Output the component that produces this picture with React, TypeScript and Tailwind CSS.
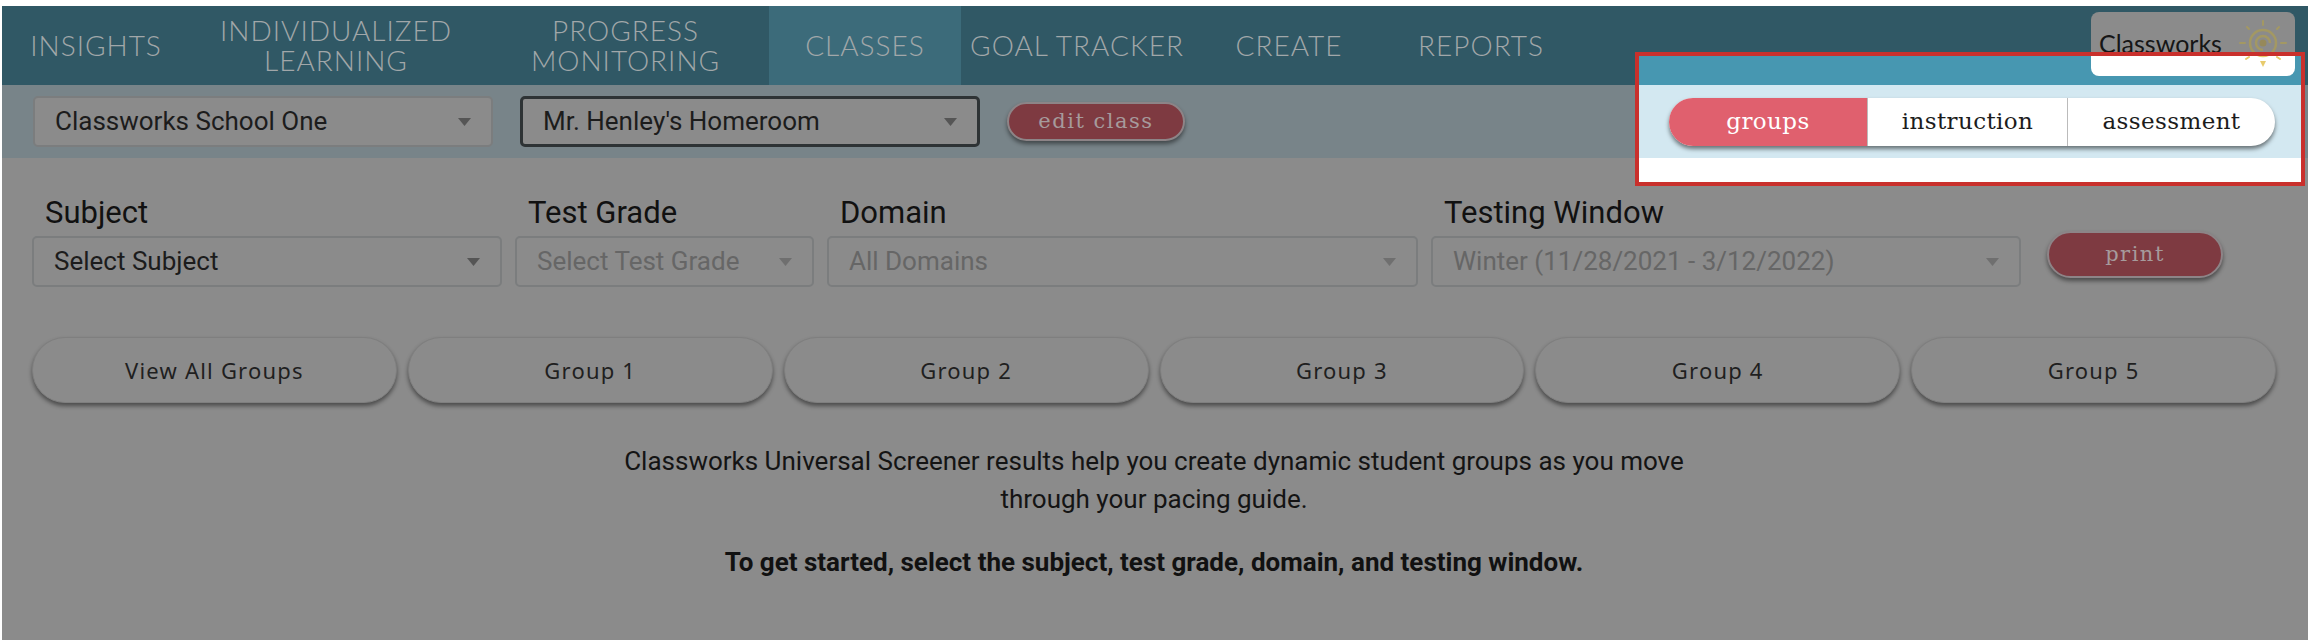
import React from "react";

const navItems: { lines: string[]; w: string; active?: boolean }[] = [
  { lines: ["INSIGHTS"], w: "w-[188px]" },
  { lines: ["INDIVIDUALIZED", "LEARNING"], w: "w-[292px]" },
  { lines: ["PROGRESS", "MONITORING"], w: "w-[287px]" },
  { lines: ["CLASSES"], w: "w-[192px]", active: true },
  { lines: ["GOAL TRACKER"], w: "w-[232px]" },
  { lines: ["CREATE"], w: "w-[192px]" },
  { lines: ["REPORTS"], w: "w-[192px]" },
];

function Select({ text, w, disabled, focus }: { text: string; w: string; disabled?: boolean; focus?: boolean }) {
  return (
    <div
      className={`${w} h-[51px] flex items-center justify-between pl-[20px] pr-[20px] rounded-[5px] text-[26px] font-['Roboto',sans-serif] ${
        focus ? "border-[3px] border-[#2e3335] bg-[#8b8b8b]" : "border-2 border-[#7b7d7e] bg-[#8b8b8b]"
      } ${disabled ? "text-[#666666]" : "text-[#1c1c1c]"}`}
    >
      <span className="whitespace-nowrap">{text}</span>
      <svg width="13" height="8" viewBox="0 0 13 8" className="shrink-0">
        <path d="M0 0h13L6.5 8z" fill={disabled ? "#6f6f6f" : "#555555"} />
      </svg>
    </div>
  );
}

function Field({ label, children }: { label: string; children: React.ReactNode }) {
  return (
    <div className="flex flex-col">
      <div className="pl-[13px] h-[42px] text-[31px] leading-[37px] text-[#111111] font-['Roboto',sans-serif]">{label}</div>
      {children}
    </div>
  );
}

function RedButton({ text, w, h }: { text: string; w: string; h: string }) {
  return (
    <div
      className={`${w} ${h} flex items-center justify-center rounded-full bg-[#7e3a41] border-2 border-[#8d8487] shadow-[0_3px_4px_rgba(0,0,0,0.45)] text-[#a69a9c] text-[21px] tracking-[1.5px] font-['DejaVu_Serif',serif]`}
    >
      {text}
    </div>
  );
}

function Sun({ className, ink, core }: { className: string; ink: string; core: string }) {
  return (
    <svg viewBox="0 0 50 50" width="50" height="50" className={className} fill="none">
      <circle cx="25" cy="25" r="13" stroke={ink} strokeWidth="2.5" />
      <path d="M25 32a7 7 0 1 1 7-7" stroke={ink} strokeWidth="2.5" />
      <circle cx="25" cy="25" r="3.5" fill={core} />
      <path d="M25 3v4M2 25h5M43 25h5M9 9l2 2M41 9l-2 2M8 41l3-2M42 41l-3-2" stroke={ink} strokeWidth="2" strokeLinecap="round" />
      <path d="M22 43h6l-3 6z" fill={ink} />
    </svg>
  );
}

export default function App() {
  return (
    <div className="relative w-[2308px] h-[640px] overflow-hidden bg-white pt-[6px] pl-[2px]">
      <nav className="h-[79px] bg-[#305865] flex text-[#a1a7a9] text-[28px] leading-[30px] font-['Lato',sans-serif] font-light tracking-[1px]">
        {navItems.map((n) => (
          <div key={n.lines[0]} className={`${n.w} flex flex-col items-center justify-center pb-[2px] ${n.active ? "bg-[#3c6b7a]" : ""}`}>
            {n.lines.map((l) => (
              <span key={l} className="whitespace-nowrap">{l}</span>
            ))}
          </div>
        ))}
      </nav>

      <div className="h-[73px] bg-[#788489] flex items-center pl-[31px]">
        <Select text="Classworks School One" w="w-[460px]" />
        <div className="w-[27px]" />
        <Select text="Mr. Henley's Homeroom" w="w-[460px]" focus />
        <div className="w-[27px]" />
        <RedButton text="edit class" w="w-[178px]" h="h-[39px]" />
      </div>

      <main className="h-[482px] bg-[#8b8b8b] pl-[30px] pr-[30px]">
        <div className="flex items-end pt-[36px]">
          <Field label="Subject"><Select text="Select Subject" w="w-[470px]" /></Field>
          <div className="w-[13px]" />
          <Field label="Test Grade"><Select text="Select Test Grade" w="w-[299px]" disabled /></Field>
          <div className="w-[13px]" />
          <Field label="Domain"><Select text="All Domains" w="w-[591px]" disabled /></Field>
          <div className="w-[13px]" />
          <Field label="Testing Window"><Select text="Winter (11/28/2021 - 3/12/2022)" w="w-[590px]" disabled /></Field>
          <div className="w-[26px]" />
          <div className="mb-[9px]"><RedButton text="print" w="w-[176px]" h="h-[47px]" /></div>
        </div>

        <div className="grid grid-cols-6 gap-[11px] mt-[50px] w-[2244px]">
          {["View All Groups", "Group 1", "Group 2", "Group 3", "Group 4", "Group 5"].map((g) => (
            <div
              key={g}
              className="h-[66px] flex items-center justify-center rounded-full bg-[#8b8b8b] border border-[#7f7f7f] shadow-[0_3px_4px_rgba(0,0,0,0.45)] text-[#1f1f1f] text-[22px] tracking-[1.2px] font-['Noto_Sans',sans-serif]"
            >
              {g}
            </div>
          ))}
        </div>

        <p className="mt-[39px] w-[2244px] text-center text-[26px] leading-[38px] text-[#141414] font-['Roboto',sans-serif]">
          Classworks Universal Screener results help you create dynamic student groups as you move
          <br />
          through your pacing guide.
        </p>
        <p className="mt-[25px] w-[2244px] text-center text-[26px] leading-[38px] font-bold text-[#111111] font-['Roboto',sans-serif]">
          To get started, select the subject, test grade, domain, and testing window.
        </p>
      </main>

      {/* Logo card, dimmed by the tour overlay */}
      <div className="absolute left-[2091px] top-[12px] w-[204px] h-[64px] rounded-[8px] bg-[#8b8b8b]">
        <span className="absolute left-[8px] top-[17px] text-[25px] leading-[28px] text-[#161616] font-['Lato',sans-serif]">Classworks</span>
        <Sun className="absolute left-[147px] top-[6px]" ink="#a39863" core="#96895a" />
      </div>

      {/* Highlighted region of the tour */}
      <div className="absolute left-[1635px] top-[52px] w-[670px] h-[134px] border-[4px] border-[#c9302c] bg-white overflow-hidden">
        <div className="h-[29px] bg-[#4797b1]" />
        <div className="h-[73px] bg-[#d3e8f1] flex items-center pl-[30px]">
          <div className="w-[606px] h-[48px] flex rounded-full overflow-hidden bg-white shadow-[0_3px_4px_rgba(0,0,0,0.5)] text-[23px] tracking-[0.4px] font-['DejaVu_Serif',serif]">
            <div className="w-[199px] flex items-center justify-center bg-[#e0606e] text-white border-r border-[#bbbbbb]">groups</div>
            <div className="w-[200px] flex items-center justify-center text-[#1c1c1c] border-r border-[#bbbbbb]">instruction</div>
            <div className="flex-1 flex items-center justify-center text-[#1c1c1c]">assessment</div>
          </div>
        </div>
        <div className="absolute left-[452px] top-[0px] w-[204px] h-[20px] rounded-b-[8px] bg-white overflow-hidden">
          <Sun className="absolute left-[147px] top-[-38px]" ink="#e8cb6c" core="#e8cb6c" />
        </div>
      </div>
    </div>
  );
}
